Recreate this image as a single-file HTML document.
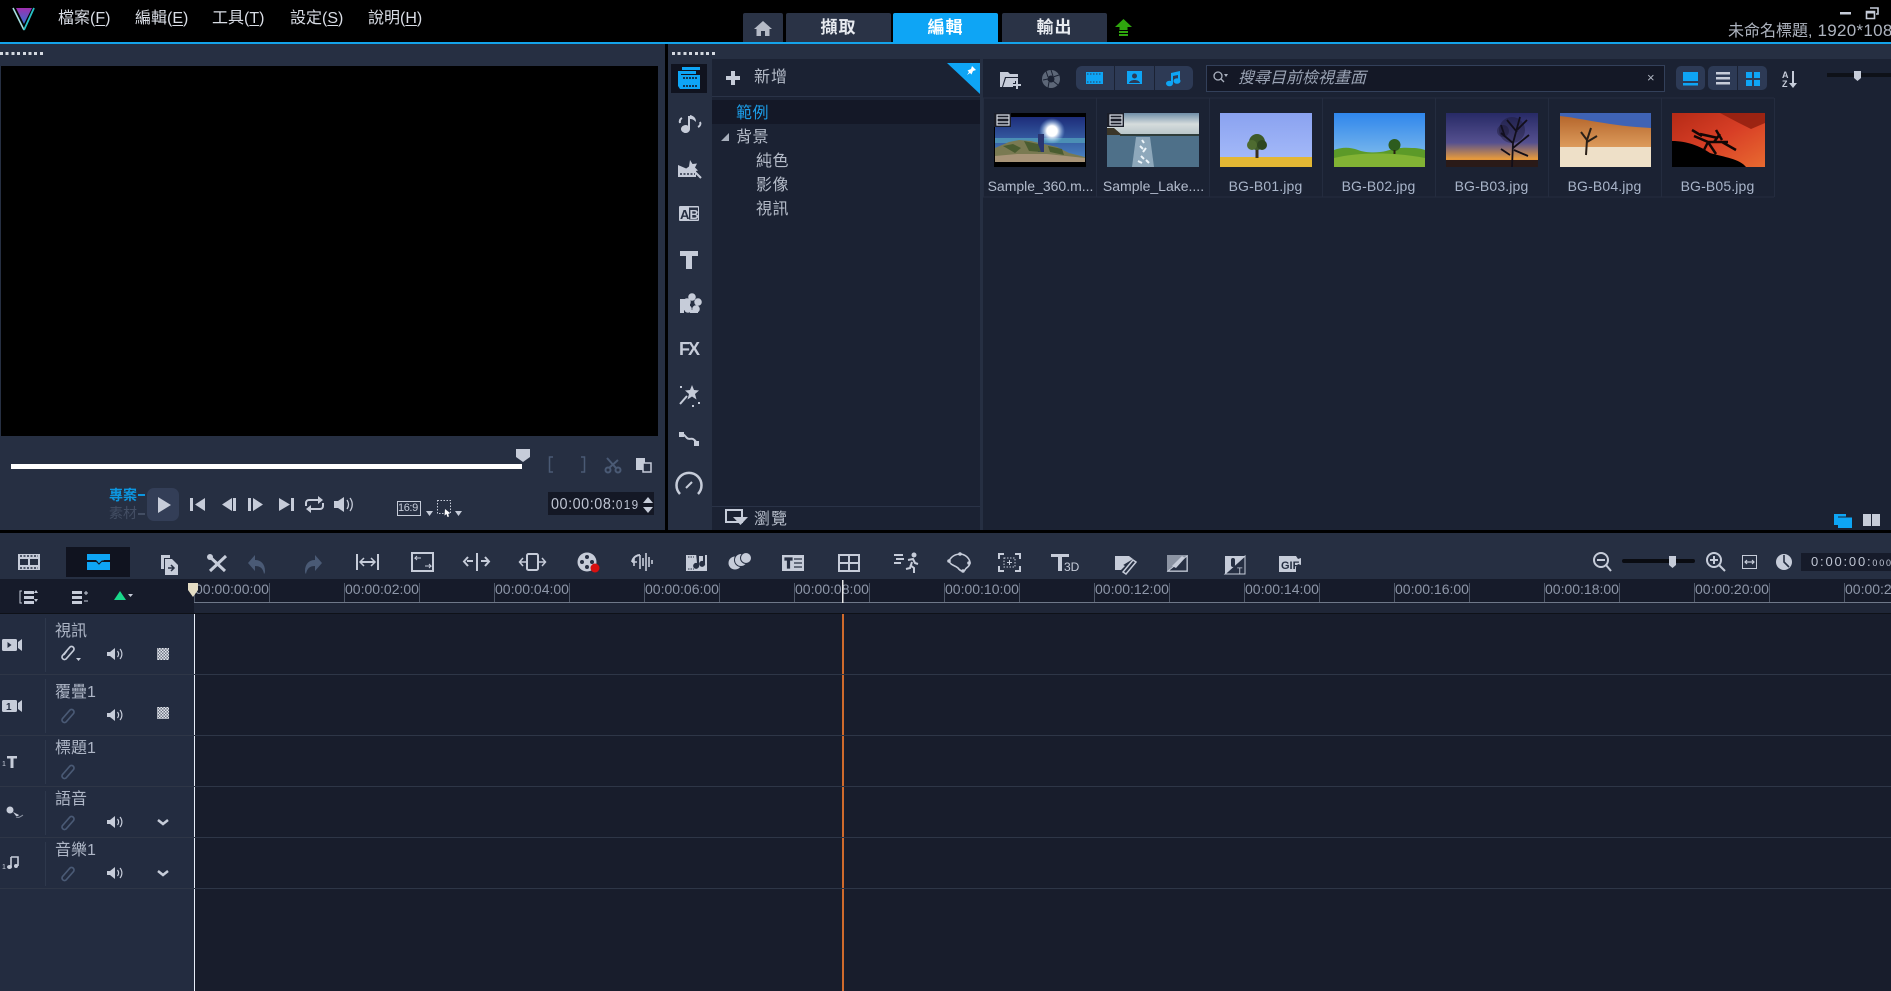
<!DOCTYPE html>
<html lang="zh-Hant"><head><meta charset="utf-8"><title>VideoStudio</title>
<style>
html,body{margin:0;padding:0;background:#000}
body{width:1891px;height:991px;overflow:hidden;position:relative;font-family:"Liberation Sans","Noto Sans CJK TC",sans-serif}
.b{position:absolute}
.t{position:absolute;white-space:nowrap;line-height:20px;height:20px;font-size:16px;color:#c3c9d5}
.m{color:#d9dde5;font-size:16px}
.m u{text-underline-offset:2px}
.d{position:absolute;height:3px;width:45px;background:repeating-linear-gradient(90deg,#d4d8e0 0 3px,transparent 3px 5.7px)}
.tab{position:absolute;top:13px;height:29px;line-height:30px;text-align:center;background:#2a3346;color:#e8ebf0;font-weight:700;font-size:17px;letter-spacing:1px;border-radius:2px 2px 0 0}
.th{position:absolute;top:176px;height:20px;width:113px;text-align:center;line-height:20px;font-size:14px;letter-spacing:.15px;color:#a9b5ca;white-space:nowrap}
.r{position:absolute;top:579px;font-size:14px;line-height:20px;color:#8e97a9;white-space:nowrap}
.tl{position:absolute;left:55px;font-size:16px;line-height:20px;color:#aeb6c6;white-space:nowrap}
svg{position:absolute;left:0;top:0}
.i{fill:#c6ccd9}.s{fill:none;stroke:#c6ccd9;stroke-width:2}.bl{fill:#0ea5f5}.g{fill:#4a5a75}.gs{fill:none;stroke:#4a5a75;stroke-width:2}
</style></head><body>
<!-- top -->
<div class="b" style="left:0;top:42px;width:1891px;height:2px;background:#14a3ea"></div>
<div class="t m" style="left:58px;top:9px">檔案(<u>F</u>)</div>
<div class="t m" style="left:135px;top:9px">編輯(<u>E</u>)</div>
<div class="t m" style="left:212px;top:9px">工具(<u>T</u>)</div>
<div class="t m" style="left:290px;top:9px">設定(<u>S</u>)</div>
<div class="t m" style="left:368px;top:9px">說明(<u>H</u>)</div>
<div class="tab" style="left:743px;width:40px"></div>
<div class="tab" style="left:786px;width:105px">擷取</div>
<div class="tab" style="left:893px;width:105px;background:#0ea5f5;color:#fff;height:30px">編輯</div>
<div class="tab" style="left:1002px;width:105px">輸出</div>
<div class="t" style="left:1728px;top:21px;color:#aeb4bf;font-size:16px">未命名標題,<span style="font-size:17px;letter-spacing:.3px"> 1920*1080</span></div>

<!-- panels -->
<div class="b" style="left:0;top:44px;width:665px;height:486px;background:#262f42"></div>
<div class="b" style="left:668px;top:44px;width:1223px;height:486px;background:#262f42"></div>
<div class="b" style="left:1px;top:66px;width:657px;height:370px;background:#000"></div>
<div class="b" style="left:712px;top:59px;width:268px;height:471px;background:#1b2233"></div>
<div class="b" style="left:983px;top:59px;width:908px;height:471px;background:#1b2233"></div>
<div class="d" style="left:0;top:52px"></div>
<div class="d" style="left:672px;top:52px"></div>
<div class="d" style="left:0;top:538px"></div>

<!-- nav tree -->
<div class="b" style="left:712px;top:96px;width:268px;height:1px;background:#2a3347"></div>
<div class="b" style="left:712px;top:100px;width:268px;height:24px;background:#141827"></div>
<div class="b" style="left:712px;top:506px;width:268px;height:1px;background:#2a3347"></div>
<div class="t" style="left:754px;top:68px;letter-spacing:1px;color:#b5bcc9">新增</div>
<div class="t" style="left:736px;top:104px;letter-spacing:0.5px;color:#1c9ce6">範例</div>
<div class="t" style="left:736px;top:128px;letter-spacing:0.5px;color:#b5bcc9">背景</div>
<div class="t" style="left:756px;top:152px;letter-spacing:0.5px;color:#b5bcc9">純色</div>
<div class="t" style="left:756px;top:176px;letter-spacing:0.5px;color:#b5bcc9">影像</div>
<div class="t" style="left:756px;top:200px;letter-spacing:0.5px;color:#b5bcc9">視訊</div>
<div class="t" style="left:754px;top:510px;letter-spacing:1px;color:#b5bcc9">瀏覽</div>

<!-- media -->
<div class="b" style="left:1076px;top:66px;width:117px;height:24px;background:#2d3a55;border-radius:6px"></div>
<div class="b" style="left:1206px;top:65px;width:457px;height:25px;background:#141826;border:1px solid #33405a"></div>
<div class="t" style="left:1238px;top:69px;font-style:italic;color:#9aa3b4">搜尋目前檢視畫面</div>
<div class="t" style="left:1647px;top:68px;font-size:13px;color:#b0b6c2">×</div>
<div class="b" style="left:1676px;top:66px;width:29px;height:24px;background:#2d3a55;border-radius:5px"></div>
<div class="b" style="left:1708px;top:66px;width:59px;height:24px;background:#2d3a55;border-radius:5px"></div>
<div class="b" style="left:1737px;top:66px;width:1px;height:24px;background:#1b2233"></div>

<div class="th" style="left:984px;color:#b3bccd;letter-spacing:0">Sample_360.m...</div>
<div class="th" style="left:1097px;color:#b3bccd;letter-spacing:0">Sample_Lake....</div>
<div class="th" style="left:1209px">BG-B01.jpg</div>
<div class="th" style="left:1322px">BG-B02.jpg</div>
<div class="th" style="left:1435px">BG-B03.jpg</div>
<div class="th" style="left:1548px">BG-B04.jpg</div>
<div class="th" style="left:1661px">BG-B05.jpg</div>

<!-- player text -->
<div class="t" style="left:109px;top:485px;font-size:14px;font-weight:700;color:#0c96e0">專案</div>
<div class="t" style="left:109px;top:503px;font-size:14px;color:#434e63">素材</div>
<div class="b" style="left:138px;top:494px;width:7px;height:2px;background:#0c96e0"></div>
<div class="b" style="left:138px;top:513px;width:7px;height:2px;background:#434e63"></div>
<div class="b" style="left:147px;top:488px;width:32px;height:33px;background:#333e57;border-radius:7px"></div>
<div class="b" style="left:397px;top:501px;width:22px;height:13px;border:1px solid #c6ccd9"></div>
<div class="t" style="left:398px;top:498px;font-size:11px;color:#c6ccd9;letter-spacing:-.4px">16:9</div>
<div class="b" style="left:548px;top:492px;width:106px;height:23px;background:#141825"></div>
<div class="t" style="left:551px;top:495px;font-size:16px;color:#bfc5d3;transform:scaleX(.9);transform-origin:0 50%;letter-spacing:.6px">00:00:08:<span style="font-size:13px;letter-spacing:1.5px">019</span></div>

<!-- timeline -->
<div class="b" style="left:0;top:533px;width:1891px;height:46px;background:#262f42"></div>
<div class="b" style="left:66px;top:547px;width:64px;height:30px;background:#10131f"></div>
<div class="b" style="left:1801px;top:553px;width:90px;height:18px;background:#161b2a"></div>
<div class="t" style="left:1811px;top:552px;font-size:13px;letter-spacing:1.8px;color:#bfc5d3">0:00:00:<span style="font-size:9px">000</span></div>
<div class="b" style="left:0;top:579px;width:194px;height:34px;background:#161b2a"></div>
<div class="b" style="left:194px;top:579px;width:1697px;height:24px;background:#161b2a"></div>
<div class="b" style="left:194px;top:603px;width:1697px;height:10px;background:#1f2637"></div>
<div class="b" style="left:0;top:613px;width:194px;height:378px;background:#232c40"></div>
<div class="b" style="left:194px;top:613px;width:1697px;height:378px;background:#181d2c"></div>
<div class="b" style="left:194px;top:613px;width:1px;height:378px;background:#e6ecf8"></div>

<div class="r" style="left:195px">00:00:00:00</div>
<div class="r" style="left:345px">00:00:02:00</div>
<div class="r" style="left:495px">00:00:04:00</div>
<div class="r" style="left:645px">00:00:06:00</div>
<div class="r" style="left:795px">00:00:08:00</div>
<div class="r" style="left:945px">00:00:10:00</div>
<div class="r" style="left:1095px">00:00:12:00</div>
<div class="r" style="left:1245px">00:00:14:00</div>
<div class="r" style="left:1395px">00:00:16:00</div>
<div class="r" style="left:1545px">00:00:18:00</div>
<div class="r" style="left:1695px">00:00:20:00</div>
<div class="r" style="left:1845px">00:00:22:00</div>

<div class="tl" style="top:622px">視訊</div>
<div class="tl" style="top:683px">覆疊1</div>
<div class="tl" style="top:739px">標題1</div>
<div class="tl" style="top:790px">語音</div>
<div class="tl" style="top:841px">音樂1</div>

<svg width="1891" height="991" viewBox="0 0 1891 991">
<defs>
<linearGradient id="lg" x1="0" y1="0" x2="0" y2="1"><stop offset="0" stop-color="#a02fb0"/><stop offset="1" stop-color="#2f6fd0"/></linearGradient>
<linearGradient id="a1" x1="0" y1="0" x2="0" y2="1"><stop offset="0" stop-color="#1d2d7a"/><stop offset="1" stop-color="#4d8ac8"/></linearGradient>
<linearGradient id="a2" x1="0" y1="0" x2="0" y2="1"><stop offset="0" stop-color="#6f8ea8"/><stop offset=".5" stop-color="#d5dcdc"/><stop offset="1" stop-color="#b7c4c8"/></linearGradient>
<linearGradient id="a3" x1="0" y1="0" x2="0" y2="1"><stop offset="0" stop-color="#8aa2f0"/><stop offset="1" stop-color="#a8bdfa"/></linearGradient>
<linearGradient id="a4" x1="0" y1="0" x2="0" y2="1"><stop offset="0" stop-color="#2f86ec"/><stop offset="1" stop-color="#8cc4ec"/></linearGradient>
<linearGradient id="a5" x1="0" y1="0" x2="0" y2="1"><stop offset="0" stop-color="#272a66"/><stop offset=".55" stop-color="#55508f"/><stop offset=".85" stop-color="#e69a3c"/><stop offset="1" stop-color="#a85a2a"/></linearGradient>
<linearGradient id="a6" x1="0" y1="0" x2="0" y2="1"><stop offset="0" stop-color="#b5662c"/><stop offset="1" stop-color="#e0a060"/></linearGradient>
<linearGradient id="a7" x1="0" y1="0" x2="1" y2="1"><stop offset="0" stop-color="#b52a16"/><stop offset=".5" stop-color="#d83f26"/><stop offset="1" stop-color="#e86a30"/></linearGradient>
<radialGradient id="sun"><stop offset="0" stop-color="#fff"/><stop offset=".4" stop-color="#fff"/><stop offset="1" stop-color="#8fc4f5" stop-opacity="0"/></radialGradient>
<pattern id="chk" width="3" height="3" patternUnits="userSpaceOnUse"><rect width="3" height="3" fill="#6f7787"/><rect width="1.500" height="1.500" fill="#e4e7ee"/><rect x="1.500" y="1.500" width="1.500" height="1.500" fill="#e4e7ee"/></pattern>
</defs>

<!-- logo -->
<path d="M13 8l11 22" stroke="#a5dfe0" stroke-width="1.600"/><path d="M34 8L24 30" stroke="#27bfc4" stroke-width="1.800"/>
<path d="M16 8h16l-8 16z" fill="url(#lg)"/>
<!-- home -->
<path d="M763 21l-9 8h2.500v7h4.500v-5h4v5h4.500v-7h2.500z" fill="#b4bac6"/>
<!-- green arrow -->
<path d="M1123.500 19l8.500 8h-4.500v3h-8v-3h-4.500z" fill="#2fa60e"/><path d="M1119 31h9v2h-9zM1119 34h9v2h-9z" fill="#2fa60e"/>
<!-- window -->
<path d="M1840 12h11v2.500h-11z" fill="#c6ccd9"/>
<path d="M1870 8h8v6h-2M1866.500 11.500h8v7h-8z" fill="none" stroke="#c6ccd9" stroke-width="1.600"/><rect x="1866" y="11" width="9" height="2.500" fill="#c6ccd9"/>

<!-- sidebar selection -->
<rect x="671" y="64" width="36" height="29" fill="#10131f"/>
<path d="M678 71h18v3h-15v6h-3z M682 67h18v3h-18z" class="bl"/>
<path d="M680 75h20v14h-20l-2-3v-8z" class="bl"/><path d="M683 78h15M683 86h15" stroke="#10131f" stroke-width="1.500" stroke-dasharray="2 1" fill="none"/>
<!-- music -->
<path d="M688 116h2v13a4.500 4 0 1 1-2-3.300zM690 115c4 1 6 3 6 7-2-2-3.500-3-6-3z" class="i"/>
<path d="M682 118c-2 1-2.500 3-2 5M700 122c1 2 0 4-2 5" class="s"/>
<!-- instant -->
<path d="M678 165l7 3 7 3 3 2v3h-17z" class="i"/><path d="M678 171h18v6h-18z" class="i"/>
<path d="M690 160l2.500 4 4.500-.5-2 4 3 3-4.500 1-2.500 3.500-1.500-4.500-4-1.500 3.500-2.500z" class="i"/><path d="M694 171l7 7" class="s"/>
<path d="M680 174h15" stroke="#262f42" stroke-width="1.500" stroke-dasharray="2 1.500"/>
<!-- AB -->
<rect x="679" y="206" width="20" height="15" class="i" rx="1"/><rect x="689" y="207.500" width="9" height="12" fill="#262f42"/>
<text x="680" y="219" font-family="Liberation Sans" font-weight="700" font-size="13" fill="#262f42">A</text><text x="689.500" y="219" font-family="Liberation Sans" font-weight="700" font-size="13" fill="#c6ccd9">B</text>
<!-- T -->
<path d="M680 251h18v5h-6v13h-6v-13h-6z" class="i"/>
<!-- flower -->
<path d="M680 299h10v14h-10z M684 313h14v-3h-14z" class="i"/>
<circle cx="692" cy="297" r="3.800" class="i"/><circle cx="698" cy="302" r="3.800" class="i"/><circle cx="696" cy="309" r="3.800" class="i"/><circle cx="688" cy="309" r="3.800" class="i"/><circle cx="687" cy="302" r="3.800" class="i"/><circle cx="692.500" cy="303.500" r="2" fill="#262f42"/>
<!-- FX -->
<text x="679" y="355" font-family="Liberation Sans" font-weight="700" font-size="18" fill="#c6ccd9" letter-spacing="-2">FX</text>
<!-- wand -->
<path d="M692 385l2 5 5 .5-4 3.500 1.500 5.500-4.500-3-4.500 3 1.500-5.500-4-3.500 5-.5z" class="i"/><path d="M687 396l-7 8" stroke="#c6ccd9" stroke-width="2"/><path d="M680 386h2v2h-2zM692 405h2v2h-2zM698 402h2v2h-2z" class="i"/>
<!-- path -->
<path d="M680 433c3 0 5 3 7 5s4 0 6 1 3 3 4 4" class="s"/><rect x="679" y="432" width="5" height="5" class="i"/><rect x="694" y="441" width="5" height="5" class="i"/>
<!-- gauge -->
<path d="M680 494a12.500 12.500 0 1 1 18 0" fill="none" stroke="#c6ccd9" stroke-width="2.500"/><path d="M686 488l6-6" class="s"/>

<!-- add -->
<path d="M726 76h5v-5h4v5h5v4h-5v5h-4v-5h-5z" class="i"/>
<!-- pin triangle -->
<path d="M947 63h33v31z" class="bl"/><path d="M972 66l4 4-3 1-1.500 3.500-1.500-1.500-3 2 2-3-1.500-1.500 3.500-1.500z" fill="#fff"/>
<!-- tree triangle -->
<path d="M729 133v8h-8z" fill="#a8afbc"/>
<!-- browse -->
<path d="M726 510h16v12h-16z" fill="none" stroke="#c6ccd9" stroke-width="2"/><path d="M733 517h15l-7.500 8z" class="i"/>

<!-- media toolbar -->
<path d="M1000 72h8l2 2h8v3h-13l-3 10h-2z" class="i"/><path d="M1006 78h12v9h-15z" class="i"/><path d="M1017 81v8M1013 85h8" stroke="#1b2233" stroke-width="4"/><path d="M1017 81v8M1013 85h8" stroke="#c6ccd9" stroke-width="2"/>
<circle cx="1051" cy="79" r="9" fill="#5d6778"/><circle cx="1051" cy="79" r="3.500" fill="#1b2233"/><path d="M1051 70l2 6M1059 75l-6 2M1058 85l-5-4M1048 88l1-6M1043 80l5-1M1046 71l2 6" stroke="#1b2233" stroke-width="1"/>
<rect x="1114" y="66" width="1" height="24" fill="#1b2233"/><rect x="1154" y="66" width="1" height="24" fill="#1b2233"/>
<rect x="1086" y="72" width="17" height="12" class="bl"/><path d="M1087 74h15M1087 82h15" stroke="#2d3a55" stroke-dasharray="1.500 1.500"/>
<rect x="1127" y="71" width="15" height="13" class="bl"/><circle cx="1134.500" cy="76" r="2.500" fill="#2d3a55"/><path d="M1129 83c1-4 10-4 11 0z" fill="#2d3a55"/>
<path d="M1171 73l9-2v9h-2v-5l-5 1v7h-2z" class="bl"/><ellipse cx="1169.500" cy="83.500" rx="3.500" ry="2.800" class="bl"/><ellipse cx="1177" cy="81" rx="3.500" ry="2.800" class="bl"/>
<circle cx="1218" cy="76" r="4" fill="none" stroke="#aab1be" stroke-width="1.300"/><path d="M1221 79l3 3" stroke="#aab1be" stroke-width="1.300"/><path d="M1224 74h4l-2 3z" fill="#aab1be"/>
<!-- view btns -->
<path d="M1683 72h15v9h-15zM1683 83h15v2.500h-15z" class="bl"/>
<path d="M1716 72h14v2.500h-14zM1716 77h14v2.500h-14zM1716 82h14v2.500h-14z" class="i"/>
<path d="M1746 72h6v6h-6zM1754 72h6v6h-6zM1746 80h6v6h-6zM1754 80h6v6h-6z" class="bl"/>
<text x="1782" y="78" font-family="Liberation Sans" font-size="9" font-weight="700" fill="#c6ccd9">A</text><text x="1782" y="87" font-family="Liberation Sans" font-size="9" font-weight="700" fill="#c6ccd9">Z</text><path d="M1793 71v14" stroke="#c6ccd9" stroke-width="2"/><path d="M1789 83h8l-4 5z" class="i"/>
<rect x="1827" y="73" width="64" height="4" fill="#0e1118"/><path d="M1854 71h7v7l-3.500 3-3.500-3z" class="i"/>

<!-- grid -->
<path d="M983 98H1774M983 197H1774M983.500 98V197M1096.500 98V197M1209.500 98V197M1322.500 98V197M1435.500 98V197M1548.500 98V197M1661.500 98V197M1774.500 98V197" stroke="#242c3f" fill="none"/>

<!-- thumb 1 -->
<rect x="994" y="113" width="92" height="54" fill="#000"/>
<rect x="995" y="117" width="90" height="45" fill="url(#a1)"/>
<rect x="995" y="138" width="90" height="5" fill="#4b8fb5"/>
<circle cx="1052" cy="131" r="13" fill="url(#sun)"/>
<path d="M995 162v-14l14-6 10-2 12 1 26 6 12 6 16 4v5z" fill="#7a7a52"/><path d="M995 162l0-6 22-2 30 0 38 4 0 4z" fill="#a89478"/><rect x="1038" y="134" width="6" height="18" fill="#2a3570"/><path d="M1003 146l10-2 8 4-6 5zM1024 141l14 3 3 8-12-1zM1048 146l14 3 2 6-14-3z" fill="#4a5c30"/>
<!-- thumb 2 -->
<rect x="1107" y="113" width="92" height="22" fill="url(#a2)"/><rect x="1107" y="135" width="92" height="32" fill="#4e7089"/>
<rect x="1120" y="134" width="79" height="2" fill="#2f3d3a"/><path d="M1107 128h7l8 7h-15z" fill="#3a3528"/>
<path d="M1136 137h14l4 30h-22z" fill="#8ea8bb"/><path d="M1142 140l2 3M1140 146l3 3M1146 148l-3 4M1141 156l3 3M1138 161l4 2M1146 160l3 3" stroke="#eef5fa" stroke-width="2"/>
<!-- thumb 3 -->
<rect x="1220" y="113" width="92" height="54" fill="url(#a3)"/><rect x="1220" y="157" width="92" height="10" fill="#e3b734"/>
<rect x="1255.500" y="148" width="3" height="10" fill="#3a2e1c"/><circle cx="1257" cy="142" r="8" fill="#3e5a28"/><circle cx="1252" cy="145" r="5" fill="#4e6b30"/><circle cx="1262" cy="145" r="5" fill="#2e4620"/>
<!-- thumb 4 -->
<rect x="1334" y="113" width="91" height="54" fill="url(#a4)"/>
<path d="M1334 167v-17c8-3 16-3 24 0 8 3 20 3 28 1 8-2 14-4 26-3 6 0 10 1 13 2v17z" fill="#5c9a28"/><path d="M1334 167v-9c25-6 60-6 91 0v9z" fill="#82b334"/>
<circle cx="1394.500" cy="145" r="6" fill="#2d5c1e"/><rect x="1393.500" y="150" width="2" height="4" fill="#2a2012"/>
<!-- thumb 5 -->
<rect x="1446" y="113" width="92" height="54" fill="url(#a5)"/><rect x="1446" y="160" width="92" height="7" fill="#2a1a18"/>
<path d="M1512 167l1-24-12-10M1513 143l7-26M1513 148l16-13M1505 137l-4-12M1517 130l10-10M1517 132l-10-12M1514 150l14 6M1510 155l-9-6" stroke="#120e18" stroke-width="1.800" fill="none"/>
<circle cx="1512" cy="130" r="13" fill="#141224" opacity=".35"/><circle cx="1503" cy="131" r="6" fill="#141224" opacity=".35"/>
<!-- thumb 6 -->
<rect x="1560" y="113" width="91" height="54" fill="#3f63b5"/>
<path d="M1560 116c20 2 50 10 91 12v22h-91z" fill="url(#a6)"/><rect x="1560" y="147" width="91" height="20" fill="#eee0c8"/>
<path d="M1586 155l1-15-6-8M1587 140l4-12M1587 142l10-6" stroke="#2a2018" stroke-width="2" fill="none"/>
<!-- thumb 7 -->
<rect x="1672" y="113" width="93" height="54" fill="url(#a7)"/><path d="M1720 113h45v10l-14 6-12-6z" fill="#8c1d0e" opacity=".8"/>
<path d="M1672 141c15 0 28 5 38 12 14 4 30 6 36 14h-74z" fill="#000"/><path d="M1672 160v-8l28-3 30 18h-58z" fill="#000"/>
<path d="M1704 150l4-8-14-6M1708 142l20 0M1714 142l6-8M1722 142l14 8M1708 142l8 12M1700 134l18 4M1692 130l10 6M1716 130l6 10" stroke="#120605" stroke-width="2.500" fill="none"/>
<!-- badges -->
<rect x="994" y="113" width="17" height="14" fill="#1a1d28"/><rect x="1107" y="113" width="17" height="14" fill="#1a1d28"/>
<path d="M997 115h12v10h-12zM997 118h12M997 122h12" fill="none" stroke="#d8dce4" stroke-width="1.200"/>
<path d="M1110 115h12v10h-12zM1110 118h12M1110 122h12" fill="none" stroke="#d8dce4" stroke-width="1.200"/>
<!-- media corner -->
<path d="M1834 514h12v11h-12zM1838 517h14v11h-14z" class="bl"/><path d="M1838 517h14" stroke="#1b2233"/>
<path d="M1863 514h17v12h-17z" class="i"/><path d="M1871.500 514v12" stroke="#1b2233"/>

<!-- player -->
<rect x="11" y="464" width="511" height="5" fill="#fff"/>
<path d="M516 449h14v8l-7 5-7-5z" fill="#c6ccd9"/>
<path d="M553 457h-3.500v15h3.500M581 457h3.500v15h-3.500" fill="none" stroke="#4a5a75" stroke-width="1.500"/>
<circle cx="608" cy="470" r="2.500" class="gs"/><circle cx="618" cy="470" r="2.500" class="gs"/><path d="M607 458l9 10M618 460l-9 8" class="gs"/>
<path d="M636 458h9v12h-9z" fill="#c6ccd9"/><rect x="643" y="463" width="8" height="9" fill="#262f42" stroke="#c6ccd9" stroke-width="1.500"/>
<path d="M158 497l13 8-13 8z" class="i"/>
<path d="M190 498h3v13h-3zM205 498v13l-10-6.500z" class="i"/>
<path d="M232 498v13l-10-6.500zM233 498h3v13h-3z" class="i"/>
<path d="M248 498h3v13h-3zM253 498l10 6.500-10 6.500z" class="i"/>
<path d="M279 498l11 6.500-11 6.500zM291 498h3v13h-3z" class="i"/>
<path d="M306 506v-3a3 3 0 0 1 3-3h10M323 503v3a3 3 0 0 1-3 3h-10" class="s"/><path d="M318 496l5 4-5 4zM311 505l-5 4 5 4z" class="i"/>
<path d="M334 501h4l6-4v15l-6-4h-4z" class="i"/><path d="M347 500c2 3 2 6 0 9M350 498c3 4 3 9 0 13" fill="none" stroke="#c6ccd9" stroke-width="1.300"/>
<path d="M426 511h7l-3.500 5z" class="i"/>
<rect x="437.500" y="500.500" width="13" height="13" fill="none" stroke="#c6ccd9" stroke-dasharray="1.500 1.500"/>
<path d="M445 509l5 4-2 .5 1 3-1.500.5-1-3-2 1.500z" fill="#fff"/><path d="M455 511h7l-3.500 5z" class="i"/>
<path d="M643 503l5-6 5 6zM643 507h10l-5 6z" class="i"/>

<!-- timeline toolbar -->
<rect x="18" y="554" width="22" height="16" class="i"/><path d="M20 556h18M20 568h18" stroke="#262f42" stroke-width="1.500" stroke-dasharray="2 1.500"/><path d="M20 559h8v6h-8zM30 559h8v6h-8z" fill="#262f42"/><path d="M29 558v8" stroke="#c6ccd9" stroke-width="2"/>
<path d="M87 554h23v6h-6l-4 4-4-4h-9z" class="bl"/><path d="M87 562h23v8h-23z" class="bl"/><path d="M87 561h9l3 3 3-3h8" stroke="#10131f" fill="none"/>
<path d="M161 555h9v3h-6v11h-3z" class="i"/><path d="M165 559h7l6 6v10h-13z" class="i"/><path d="M168 568h6M171 565l3 3-3 3" stroke="#262f42" stroke-width="1.500" fill="none"/>
<path d="M209 556l16 15M226 556l-16 15" stroke="#c6ccd9" stroke-width="3"/><circle cx="210" cy="557" r="3" fill="#c6ccd9"/>
<path d="M255 555v5c6 0 10 4 10 11 0 1 0 2-1 3-1-6-4-8-9-8v5l-7-8z" fill="#4a5a75"/>
<path d="M315 555v5c-6 0-10 4-10 11 0 1 0 2 1 3 1-6 4-8 9-8v5l7-8z" fill="#4a5a75"/>
<path d="M357 554v16M378 554v16" class="s"/><path d="M361 562h13" class="s"/><path d="M364 558l-4 4 4 4M371 558l4 4-4 4" fill="none" stroke="#c6ccd9" stroke-width="1.500"/>
<rect x="412" y="553" width="21" height="18" fill="none" stroke="#c6ccd9" stroke-width="2"/><path d="M421 558h-6l2-2M415 558l2 2M425 566h6l-2-2M431 566l-2 2" fill="none" stroke="#c6ccd9"/>
<path d="M477 553v18" class="s"/><path d="M473 561h-6M468 557l-4 4.500 4 4.500M481 561h7M485 557l4 4.500-4 4.500" fill="none" stroke="#c6ccd9" stroke-width="2"/>
<rect x="527" y="554" width="11" height="16" rx="1.500" class="s"/><path d="M526 562h-6M523 558l-3.500 4 3.500 4M539 562h6M542 558l3.500 4-3.500 4" fill="none" stroke="#c6ccd9" stroke-width="1.500"/>
<circle cx="587" cy="562" r="9.500" class="i"/><circle cx="587" cy="557" r="2" fill="#262f42"/><circle cx="582" cy="562" r="2" fill="#262f42"/><circle cx="587" cy="567" r="2" fill="#262f42"/><circle cx="592" cy="562" r="2" fill="#262f42"/><circle cx="595" cy="568" r="4.500" fill="#d81010"/>
<path d="M632 562h5M634 558v8M640 555v14M643 558v8M646 553v18M649 557v10M652 560v4" stroke="#c6ccd9" stroke-width="1.600"/><path d="M632 562c1-5 5-7 8-7" stroke="#c6ccd9" stroke-width="2" fill="none"/>
<rect x="686" y="555" width="21" height="16" class="i"/><path d="M696 553h5l4 2v8a3 3 0 1 1-2-2v-5h-4v9a3 3 0 1 1-2-2z" fill="#262f42"/><path d="M688 557h6M688 569h6" stroke="#262f42" stroke-dasharray="1.500 1"/>
<circle cx="735" cy="563" r="6.500" class="i"/><circle cx="741" cy="560" r="6.500" class="i" stroke="#262f42"/><circle cx="746" cy="558" r="5.500" class="i" stroke="#262f42"/>
<rect x="782" y="555" width="22" height="16" class="i"/><path d="M785 558h7v2h-2.500v8h-2v-8h-2.500zM794 559h8M794 563h8M794 567h8" stroke="#262f42" fill="#262f42" stroke-width="1.200"/>
<rect x="839" y="555" width="20" height="16" class="s"/><path d="M839 563h20M849 555v16" class="s"/>
<circle cx="914" cy="555" r="2.500" class="i"/><path d="M908 560l5-1 2 4 3 1M912 562l-2 6-4 1M910 565l4 3 0 5M894 555h9M896 559h8M894 563h7" fill="none" stroke="#c6ccd9" stroke-width="2"/>
<path d="M949 561c3-6 8-7 12-7 6 1 9 6 9 9-1 5-4 4-5 7-2 2-5 1-7-2-3-3-7-2-9-7z" fill="none" stroke="#c6ccd9" stroke-width="1.600"/><g class="i"><circle cx="960" cy="554" r="1.800"/><circle cx="949" cy="561" r="1.800"/><circle cx="969" cy="563" r="1.800"/><circle cx="963" cy="571" r="1.800"/></g>
<path d="M1004 554h-5v5M1015 554h5v5M1004 571h-5v-5M1015 571h5v-5" fill="none" stroke="#c6ccd9" stroke-width="2"/><rect x="1004" y="558" width="11" height="9" fill="none" stroke="#c6ccd9" stroke-dasharray="1.500 1.500"/><path d="M1009.500 560v5M1007 562.500h5" stroke="#c6ccd9"/>
<path d="M1051 554h18v3h-7v14h-4v-14h-7z" class="i"/><text x="1064" y="571" font-family="Liberation Sans" font-size="12" fill="#c6ccd9">3D</text>
<path d="M1115 556h14l4 3-18 11z" class="i"/><path d="M1115 560l10 6-4 4h-6z" class="i"/><path d="M1123 572l10-12 3 2-10 12z" fill="none" stroke="#c6ccd9" stroke-width="1.500"/>
<rect x="1167" y="555" width="21" height="17" fill="#8c94a3"/><path d="M1168 571l19-15v15z" fill="#262f42" stroke="#c6ccd9"/><path d="M1172 566l10-10 3 2-9 10z" class="i"/>
<rect x="1225" y="556" width="20" height="18" class="i"/><path d="M1245 556v18h-20z" fill="#262f42" stroke="#c6ccd9"/><path d="M1233 558a2 2 0 0 1 2 2v5a2 2 0 0 1-4 0v-5a2 2 0 0 1 2-2z" fill="#262f42"/><text x="1237" y="574" font-family="Liberation Sans" font-size="9" fill="#c6ccd9">T</text>
<path d="M1279 556h17l2 3 3-1v7l-3-1-2 3v5h-17z" class="i"/><text x="1281" y="569" font-family="Liberation Sans" font-size="11" font-weight="700" fill="#262f42">GIF</text>
<!-- zoom -->
<circle cx="1601" cy="560" r="7" class="s"/><path d="M1597 560h8" class="s"/><path d="M1606 565l5 6" class="s"/>
<rect x="1622" y="559" width="73" height="4" rx="2" fill="#0a0c12"/><path d="M1669 556h7v9l-3.500 3-3.500-3z" class="i"/>
<circle cx="1714" cy="560" r="7" class="s"/><path d="M1710 560h8M1714 556v8" class="s"/><path d="M1719 565l6 6" class="s"/>
<rect x="1742.500" y="555.500" width="14" height="13" fill="none" stroke="#c6ccd9"/><path d="M1745 562h9M1747 560l-2 2 2 2M1752 560l2 2-2 2" fill="none" stroke="#c6ccd9" stroke-width="1.200"/>
<circle cx="1784" cy="562" r="8" class="i"/><path d="M1784 555v7l5 5" stroke="#262f42" stroke-width="1.600" fill="none"/>

<!-- header -->
<path d="M22 591h-2v12h2" fill="none" stroke="#c6ccd9"/><path d="M24 591h10v3h-10zM24 596h10v3h-10zM24 601h10v3h-10z" class="i"/><path d="M36 590l2 3h-4zM36 602l2-3h-4z" class="i"/>
<path d="M72 591h10v3h-10zM72 596h10v3h-10zM72 601h10v3h-10z" class="i"/><path d="M84 593h4M86 591v4M84 601h4" stroke="#c6ccd9"/>
<path d="M120 591l6 9h-12z" fill="#19d88a"/><path d="M128 594h5l-2.500 3z" class="i"/>
<!-- ruler -->
<path d="M194 602.500H1891" stroke="#6f7889"/>
<path d="M194.500 583v19m75-19v19m75-19v19m75-19v19m75-19v19m75-19v19m75-19v19m75-19v19m75-19v19m75-19v19m75-19v19m75-19v19m75-19v19m75-19v19m75-19v19m75-19v19m75-19v19m75-19v19m75-19v19m75-19v19m75-19v19m75-19v19m75-19v19" stroke="#4f5869" fill="none"/>
<path d="M188 583h10v7l-5 7-5-7z" fill="#e4dcc4"/>
<!-- playhead -->
<rect x="842" y="580" width="1.500" height="23" fill="#e8e8e8"/><rect x="842" y="613" width="2" height="378" fill="#cf6a2c"/>
<!-- tracks lines -->
<path d="M0 613.500H1891" stroke="#0e1118"/>
<path d="M0 674.500H1891M0 735.500H1891M0 786.500H1891M0 837.500H1891M0 888.500H1891" stroke="#2e3647"/>
<path d="M45.500 618V672M45.500 679V733M45.500 740V784M45.500 791V835M45.500 842V886" stroke="#2e384c"/>
<!-- track icons -->
<rect x="2" y="639" width="15" height="12" rx="1.500" class="i"/><path d="M7.500 642l4 3-4 3z" fill="#232c40"/><path d="M18 642l4-3v12l-4-3z" class="i"/>
<rect x="2" y="700" width="15" height="12" rx="1.500" class="i"/><text x="6" y="710" font-family="Liberation Sans" font-size="10" font-weight="700" fill="#232c40">1</text><path d="M18 703l4-3v12l-4-3z" class="i"/>
<text x="2" y="766" font-family="Liberation Sans" font-size="7" fill="#c6ccd9">1</text><path d="M7 756h10v2.500h-3.500v9.500h-3v-9.500h-3.500z" class="i"/>
<circle cx="10" cy="810" r="3.500" class="i"/><path d="M13 812l6 3-1 1h-2z" class="i"/><path d="M16 817c3 1 4 0 7-2" fill="none" stroke="#8c94a3"/>
<text x="2" y="869" font-family="Liberation Sans" font-size="7" fill="#c6ccd9">1</text><ellipse cx="9.500" cy="867" rx="2.500" ry="2" class="i"/><ellipse cx="16" cy="866" rx="2" ry="2" class="i"/><path d="M11 857h7v9M11 857v10" stroke="#c6ccd9" stroke-width="1.600" fill="none"/>
<!-- links -->
<g fill="none" stroke-width="1.700" stroke="#c6ccd9"><path d="M63 655l7-8a2.500 2.500 0 0 1 3.500 3.500l-7 8a2.500 2.500 0 0 1-4-3z"/><path d="M67 651l-3 4" stroke-width="1.200"/></g>
<path d="M76 658h5l-2.500 3z" class="i"/>
<g fill="none" stroke-width="1.700" stroke="#4a5a75"><path d="M63 718l7-8a2.500 2.500 0 0 1 3.500 3.500l-7 8a2.500 2.500 0 0 1-4-3z"/><path d="M63 774l7-8a2.500 2.500 0 0 1 3.500 3.500l-7 8a2.500 2.500 0 0 1-4-3z"/><path d="M63 825l7-8a2.500 2.500 0 0 1 3.500 3.500l-7 8a2.500 2.500 0 0 1-4-3z"/><path d="M63 876l7-8a2.500 2.500 0 0 1 3.500 3.500l-7 8a2.500 2.500 0 0 1-4-3z"/></g>
<!-- speakers -->
<g id="v"><path d="M107 652h3l5-4v12l-5-4h-3z" class="i"/><path d="M117.500 651c1.500 2 1.500 4 0 6M120 649c2.500 3 2.500 7 0 10" fill="none" stroke="#c6ccd9" stroke-width="1.200"/></g>
<use href="#v" y="61"/><use href="#v" y="168"/><use href="#v" y="219"/>
<!-- checker -->
<rect x="157" y="648" width="12" height="12" fill="url(#chk)"/><rect x="157" y="707" width="12" height="12" fill="url(#chk)"/>
<!-- chevrons -->
<path d="M158 820l5 4 5-4" fill="none" stroke="#c6ccd9" stroke-width="2.500"/><path d="M158 871l5 4 5-4" fill="none" stroke="#c6ccd9" stroke-width="2.500"/>
</svg>
</body></html>
